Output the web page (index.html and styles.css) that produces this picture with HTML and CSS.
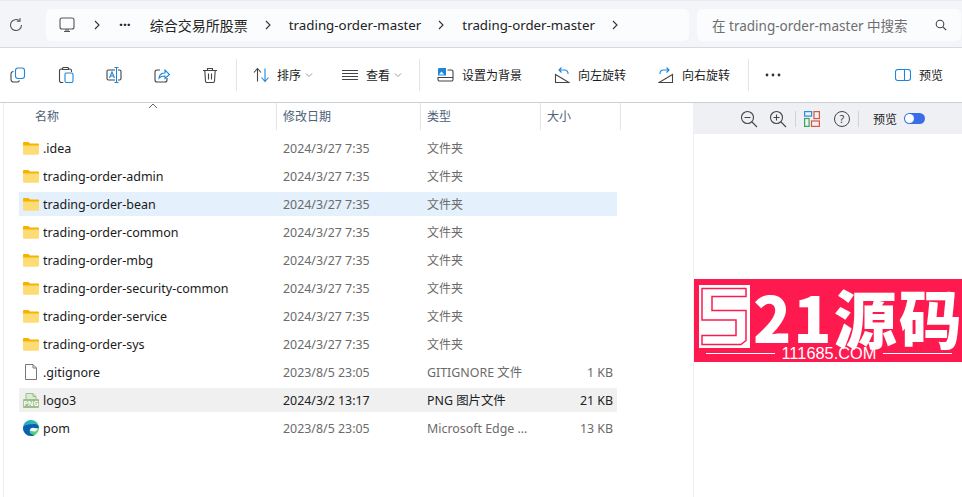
FILE: index.html
```html
<!DOCTYPE html>
<html lang="zh-CN">
  <head>
    <meta charset="UTF-8" />
    <title>trading-order-master</title>
    <link rel="stylesheet" href="styles.css">
  </head>
  <body>
    <svg class="defs" width="0" height="0">
      <symbol id="folder" viewBox="0 0 16 16">
        <path d="M0 3.200C0 2.500.5 2 1.200 2h4.200l1.800 1.600h7.600c.7 0 1.200.5 1.200 1.200V6H0z" fill="#f4b400"/>
        <path d="M0 5.400h16v8.200c0 .7-.5 1.200-1.200 1.200H1.200C.5 14.800 0 14.300 0 13.600z" fill="#fddc75"/>
      </symbol>
      <symbol id="chev" viewBox="0 0 8 12">
        <path d="M2 2l4 4-4 4" fill="none" stroke="#333" stroke-width="1.100"/>
      </symbol>
      <symbol id="down" viewBox="0 0 8 8">
        <path d="M1 2.500l3 3 3-3" fill="none" stroke="#999" stroke-width="1"/>
      </symbol>
    </svg>

    <header class="topbar">
      <svg class="reload" width="16" height="16" viewBox="0 0 16 16" fill="none" stroke="#555" stroke-width="1.100">
        <path d="M13.500 8A5.500 5.500 0 1 1 11.500 3.800"/>
        <path d="M12 1v3.200H8.800"/>
      </svg>
      <nav class="crumbs">
        <svg width="16" height="16" viewBox="0 0 16 16" fill="none" stroke="#555" stroke-width="1.100">
          <rect x="1" y="1" width="14" height="11" rx="2"/>
          <path d="M5 14.500h6M7 12v2M9 12v2"/>
        </svg>
        <svg class="chev first" width="8" height="12"><use href="#chev"/></svg>
        <span class="more">···</span>
        <span class="crumb">综合交易所股票</span>
        <svg class="chev" width="8" height="12"><use href="#chev"/></svg>
        <span class="crumb folder-crumb">trading-order-master</span>
        <svg class="chev" width="8" height="12"><use href="#chev"/></svg>
        <span class="crumb folder-crumb">trading-order-master</span>
        <svg class="chev" width="8" height="12"><use href="#chev"/></svg>
      </nav>
      <div class="search">
        <span>在 trading-order-master 中搜索</span>
        <svg width="12" height="12" viewBox="0 0 12 12" fill="none" stroke="#444" stroke-width="1.100">
          <circle cx="5" cy="5" r="3.800"/>
          <path d="M8 8l3.200 3.200"/>
        </svg>
      </div>
    </header>

    <div class="toolbar">
      <div class="icons">
        <svg width="16" height="16" viewBox="0 0 16 16" fill="none" stroke-width="1.100">
          <rect x="5.500" y="1" width="9" height="10.500" rx="2.500" stroke="#1b86dc"/>
          <path d="M3.500 4.500A2.500 2.500 0 0 0 1 7v5.500A2.500 2.500 0 0 0 3.500 15h3.500a2.500 2.500 0 0 0 2.500-1.500" stroke="#444"/>
        </svg>
        <svg width="16" height="16" viewBox="0 0 16 16" fill="none" stroke-width="1.100">
          <path d="M4.500 2H3.200A1.700 1.700 0 0 0 1.500 3.700v10.100a1.700 1.700 0 0 0 1.700 1.700h2M10.500 2h1.300a1.700 1.700 0 0 1 1.700 1.700V5M4.500 2.500V1.500a1 1 0 0 1 1-1h4a1 1 0 0 1 1 1v1z" stroke="#444"/>
          <rect x="7" y="6" width="8" height="9.500" rx="1.500" stroke="#1b86dc"/>
        </svg>
        <svg width="16" height="16" viewBox="0 0 16 16" fill="none" stroke-width="1.100">
          <path d="M9 3H2.500A1.500 1.500 0 0 0 1 4.500v7A1.500 1.500 0 0 0 2.500 13H9M12 3h1.500A1.500 1.500 0 0 1 15 4.500v7a1.500 1.500 0 0 1-1.500 1.500H12" stroke="#444"/>
          <path d="M3.500 11L6 5l2.500 6M4.500 9h3M8.500 .5h4M8.500 15.500h4M10.500 .5v15" stroke="#1b86dc"/>
        </svg>
        <svg width="16" height="16" viewBox="0 0 16 16" fill="none" stroke-width="1.100">
          <path d="M6 3H3a2 2 0 0 0-2 2v8a2 2 0 0 0 2 2h8a2 2 0 0 0 2-2v-2" stroke="#444"/>
          <path d="M5 11c.5-3.500 3-5 6-5V3l4.500 4.500L11 11.500V9c-2.500 0-4.500.5-6 2z" stroke="#1b86dc"/>
        </svg>
        <svg width="16" height="16" viewBox="0 0 16 16" fill="none" stroke="#444" stroke-width="1.100">
          <path d="M1 3.500h14M5.500 3.500V1.500h5v2M2.800 3.500l.7 10.500a1.500 1.500 0 0 0 1.500 1.500h6a1.500 1.500 0 0 0 1.500-1.500l.7-10.500M6.500 6.500v6M9.500 6.500v6"/>
        </svg>
      </div>
      <span class="sep"></span>
      <button class="tool sort">
        <svg width="16" height="16" viewBox="0 0 16 16" fill="none" stroke-width="1.100">
          <path d="M1 5.500L4.500 1.500 8 5.500M4.500 1.500v13" stroke="#444"/>
          <path d="M8.500 10.500l3.500 4 3.500-4M12 14.500v-13" stroke="#1b86dc"/>
        </svg>
        <span>排序</span>
        <svg class="down" width="8" height="8"><use href="#down"/></svg>
      </button>
      <button class="tool view">
        <svg width="16" height="16" viewBox="0 0 16 16" fill="none" stroke="#444" stroke-width="1">
          <path d="M0 3.500h16M0 6.500h16M0 9.500h16M0 12.500h16"/>
        </svg>
        <span>查看</span>
        <svg class="down" width="8" height="8"><use href="#down"/></svg>
      </button>
      <span class="sep after-view"></span>
      <button class="tool setbg">
        <svg width="17" height="16" viewBox="0 0 17 16" fill="none">
          <path d="M1 2.200A1.200 1.200 0 0 1 2.200 1H9v7.500H1z" fill="#1b86dc"/>
          <path d="M2 7.500l2.500-3 2.500 3z" fill="#fff"/>
          <path d="M10.500 3h4A1.500 1.500 0 0 1 16 4.500v8a1.500 1.500 0 0 1-1.500 1.500h-12A1.500 1.500 0 0 1 1 12.500V10.500h15" stroke="#444" stroke-width="1.100"/>
        </svg>
        <span>设置为背景</span>
      </button>
      <button class="tool rotate">
        <svg width="16" height="16" viewBox="0 0 16 16" fill="none" stroke-width="1.100">
          <path d="M1.500 7.500v8H15z" stroke="#444"/>
          <path d="M7.500 .5L5 3l2.500 2.500M5 3h5.500a3.500 3.500 0 0 1 3.500 4" stroke="#1b86dc"/>
        </svg>
        <span>向左旋转</span>
      </button>
      <button class="tool rotate">
        <svg width="16" height="16" viewBox="0 0 16 16" fill="none" stroke-width="1.100">
          <path d="M14.500 7.500v8H1z" stroke="#444"/>
          <path d="M8.500 .5L11 3 8.500 5.500M11 3H5.500A3.500 3.500 0 0 0 2 7" stroke="#1b86dc"/>
        </svg>
        <span>向右旋转</span>
      </button>
      <span class="sep after-rotate"></span>
      <svg class="dots" width="16" height="4" viewBox="0 0 16 4" fill="#333">
        <circle cx="2" cy="2" r="1.400"/><circle cx="8" cy="2" r="1.400"/><circle cx="14" cy="2" r="1.400"/>
      </svg>
      <button class="tool preview">
        <svg width="16" height="12" viewBox="0 0 16 12" fill="none" stroke="#1b86dc" stroke-width="1.100">
          <rect x=".5" y=".5" width="15" height="11" rx="2.500"/>
          <path d="M9.500 .5v11"/>
        </svg>
        <span>预览</span>
      </button>
    </div>

    <main class="content">
      <section class="files">
        <div class="cols head">
          <div class="hname">名称<svg class="caret" width="10" height="6" viewBox="0 0 10 6"><path d="M1 5l4-4 4 4" fill="none" stroke="#666"/></svg></div>
          <div>修改日期</div>
          <div>类型</div>
          <div>大小</div>
        </div>
        <div class="cols row"><div class="name"><svg width="16" height="16"><use href="#folder"/></svg>.idea</div><div>2024/3/27 7:35</div><div class="kind">文件夹</div><div></div></div>
        <div class="cols row"><div class="name"><svg width="16" height="16"><use href="#folder"/></svg>trading-order-admin</div><div>2024/3/27 7:35</div><div class="kind">文件夹</div><div></div></div>
        <div class="cols row hover"><div class="name"><svg width="16" height="16"><use href="#folder"/></svg>trading-order-bean</div><div>2024/3/27 7:35</div><div class="kind">文件夹</div><div></div></div>
        <div class="cols row"><div class="name"><svg width="16" height="16"><use href="#folder"/></svg>trading-order-common</div><div>2024/3/27 7:35</div><div class="kind">文件夹</div><div></div></div>
        <div class="cols row"><div class="name"><svg width="16" height="16"><use href="#folder"/></svg>trading-order-mbg</div><div>2024/3/27 7:35</div><div class="kind">文件夹</div><div></div></div>
        <div class="cols row"><div class="name"><svg width="16" height="16"><use href="#folder"/></svg>trading-order-security-common</div><div>2024/3/27 7:35</div><div class="kind">文件夹</div><div></div></div>
        <div class="cols row"><div class="name"><svg width="16" height="16"><use href="#folder"/></svg>trading-order-service</div><div>2024/3/27 7:35</div><div class="kind">文件夹</div><div></div></div>
        <div class="cols row"><div class="name"><svg width="16" height="16"><use href="#folder"/></svg>trading-order-sys</div><div>2024/3/27 7:35</div><div class="kind">文件夹</div><div></div></div>
        <div class="cols row">
          <div class="name">
            <svg width="16" height="16" viewBox="0 0 16 16" fill="#fff" stroke="#777">
              <path d="M2.500 .5h7.500l3.500 3.500v11.500h-11z"/><path d="M10 .5v3.500h3.500" fill="none"/>
            </svg>.gitignore
          </div>
          <div>2023/8/5 23:05</div><div>GITIGNORE 文件</div><div class="size">1 KB</div>
        </div>
        <div class="cols row selected">
          <div class="name">
            <span class="png">
              <svg width="16" height="16" viewBox="0 0 16 16" fill="#dcebd3" stroke="#9dbf8c">
                <path d="M3 9V1.500h7l3 3V9"/><path d="M10 1.500v3h3" fill="none"/>
              </svg>
              <span class="png-label">PNG</span>
            </span>logo3
          </div>
          <div>2024/3/2 13:17</div><div>PNG 图片文件</div><div class="size">21 KB</div>
        </div>
        <div class="cols row">
          <div class="name">
            <svg width="16" height="16" viewBox="0 0 16 16">
              <defs>
                <linearGradient id="edge" x1="0" y1="0" x2="1" y2="1">
                  <stop offset="0" stop-color="#1aa0d8"/><stop offset=".5" stop-color="#2fc3a0"/><stop offset="1" stop-color="#7fe05a"/>
                </linearGradient>
              </defs>
              <circle cx="8" cy="8" r="8" fill="url(#edge)"/>
              <path d="M0 8a8 8 0 0 0 8 8c2 0 3.500-.7 4.500-1.500-3 .8-6-.8-6-3.500 0-2 2-3 4-3 2.500 0 5 .5 5.500 0 0-2-1.500-4-5-4C5 4.500 1 4.500 0 8z" fill="#0f5fb0"/>
              <path d="M7 10.500c0-2 2-3 4-2.500 1.500.3 3 .8 4 .2-.5 2-2 3.200-4 3.200-2 0-4-1-4-.900z" fill="#fff"/>
            </svg>pom
          </div>
          <div>2023/8/5 23:05</div><div>Microsoft Edge ...</div><div class="size">13 KB</div>
        </div>
      </section>

      <aside class="pane">
        <div class="pane-bar">
          <svg width="18" height="18" viewBox="0 0 18 18" fill="none" stroke="#444" stroke-width="1.100">
            <circle cx="7.500" cy="7.500" r="6"/><path d="M12 12l5 5M4.500 7.500h6"/>
          </svg>
          <svg class="zoomin" width="18" height="18" viewBox="0 0 18 18" fill="none" stroke="#444" stroke-width="1.100">
            <circle cx="7.500" cy="7.500" r="6"/><path d="M12 12l5 5M4.500 7.500h6M7.500 4.500v6"/>
          </svg>
          <span class="bar-sep"></span>
          <svg class="layout" width="16" height="16" viewBox="0 0 16 16" fill="none" stroke-width="1.200">
            <rect x=".6" y=".6" width="7" height="4.500" stroke="#2a8fe0"/>
            <rect x="10" y=".6" width="5.400" height="7" stroke="#d9593d"/>
            <rect x=".6" y="7.500" width="4.500" height="7.900" stroke="#3fa45b"/>
            <rect x="7.500" y="10" width="7.900" height="5.400" stroke="#d9593d"/>
          </svg>
          <span class="help">?</span>
          <span class="bar-sep"></span>
          <span class="bar-label">预览</span>
          <span class="toggle"><span class="knob"></span></span>
        </div>
        <div class="pane-body">
          <div class="logo">
            <div class="logo-top">
              <svg class="mark" width="51" height="63" viewBox="0 0 51 63">
                <rect width="51" height="63" fill="#fff"/>
                <path d="M3 3.500h44v8H13v14h34v30l-5 4H3v-9h34V35H3z" fill="none" stroke="#fe1a4f" stroke-width="1.500"/>
              </svg>
              <span class="logo-name">21源码</span>
            </div>
            <div class="logo-url"><span class="rule"></span><span>111685.COM</span><span class="rule"></span></div>
          </div>
        </div>
      </aside>
    </main>
  </body>
</html>
```

FILE: styles.css
```css
* {
  box-sizing: border-box;
}
html,
body {
  height: 100%;
}
body {
  margin: 0;
  overflow: hidden;
  background-color: #fff;
  color: #1a1a1a;
  font-family: "Noto Sans", "Noto Sans CJK SC", sans-serif;
  font-size: 12px;
}
button {
  padding: 0;
  border: 0;
  background: none;
  color: inherit;
  font: inherit;
}
.defs {
  position: absolute;
}

/* address row */
.topbar {
  display: flex;
  align-items: center;
  height: 48px;
  padding: 1px 1px 0 8px;
  background-color: #f3f5f9;
  border-top: 1px solid #e9edf3;
  border-bottom: 1px solid #d6d9df;
}
.reload {
  margin-right: 22px;
}
.crumbs {
  display: flex;
  align-items: center;
  width: 643px;
  height: 32px;
  padding-left: 13px;
  background-color: #fbfcfe;
  border-radius: 5px;
  font-size: 14px;
  color: #222;
}
.folder-crumb {
  font-size: 13.300px;
}
.chev {
  margin: 0 17px 0 16px;
}
.chev.first {
  margin: 0 18px 0 18px;
}
.more {
  margin-right: 19px;
  font-weight: 700;
}
.search {
  display: flex;
  align-items: center;
  justify-content: space-between;
  width: 264px;
  height: 32px;
  margin-left: 8px;
  padding: 0 14px 0 15px;
  background-color: #fbfcfe;
  border-radius: 5px;
  font-size: 13.500px;
  color: #6e6e6e;
}

/* command bar */
.toolbar {
  display: flex;
  align-items: center;
  height: 55px;
  padding: 0 19px 0 10px;
  border-bottom: 1px solid #ccd0d6;
}
.icons {
  display: flex;
  gap: 32px;
}
.sep {
  width: 1px;
  height: 32px;
  margin-left: 18px;
  background-color: #e5e5e5;
}
.sep.after-view {
  margin-left: 17px;
}
.tool {
  display: flex;
  align-items: center;
  gap: 8px;
}
.down {
  margin-left: -4px;
}
.sort {
  margin-left: 16px;
}
.view {
  margin-left: 29px;
}
.setbg {
  margin-left: 17px;
}
.rotate {
  margin-left: 32px;
}
.dots {
  margin-left: 16px;
}
.preview {
  margin-left: auto;
}

/* file list */
.content {
  display: flex;
  height: 394px;
}
.files {
  flex: none;
  width: 693px;
  padding-left: 19px;
  background: linear-gradient(#eeeeee, #eeeeee) 3px 0 / 1px 100% no-repeat;
}
.cols {
  display: grid;
  grid-template-columns: 257px 144px 120px 77px;
  width: 598px;
  align-items: center;
}
.head {
  grid-template-columns: 258px 144px 120px 80px;
  height: 27px;
  width: 602px;
  margin-bottom: 6px;
  color: #4d6179;
}
.head > div {
  display: flex;
  align-items: center;
  height: 100%;
  padding: 0 0 2px 6px;
  border-right: 1px solid #e5e5e5;
}
.head > .hname {
  position: relative;
  padding-left: 16px;
}
.caret {
  position: absolute;
  left: 129px;
  top: 0;
}
.row {
  height: 24px;
  margin-bottom: 4px;
  color: #6b6b6b;
  font-size: 12.400px;
}
.row > div {
  padding-left: 7px;
  white-space: nowrap;
}
.row > .kind {
  font-size: 12px;
}
.row > .name {
  display: flex;
  align-items: center;
  gap: 4px;
  padding-left: 4px;
  color: #1a1a1a;
  font-size: 12.500px;
}
.row > .size {
  padding: 0 4px 0 0;
  text-align: right;
}
.hover {
  background-color: #e4f0fb;
}
.selected {
  background-color: #f0f0f0;
  color: #222;
}
.png {
  position: relative;
  display: block;
  width: 16px;
  height: 16px;
}
.png svg {
  display: block;
}
.png-label {
  position: absolute;
  left: 0;
  bottom: 0;
  width: 16px;
  height: 9px;
  background-color: #9dbf8c;
  border-radius: 1px;
  color: #fff;
  font-size: 7px;
  font-weight: 700;
  line-height: 9px;
  text-align: center;
}

/* preview side */
.pane {
  flex: 1;
  min-width: 0;
  display: flex;
  flex-direction: column;
  border-left: 1px solid #f0f0f0;
}
.pane-bar {
  display: flex;
  align-items: center;
  height: 31px;
  margin-left: -1px;
  padding-left: 47px;
  background-color: #eef0f4;
}
.zoomin {
  margin-left: 11px;
}
.bar-sep {
  width: 1px;
  height: 16px;
  margin: 0 8px;
  background-color: #d0d3d8;
}
.help {
  display: flex;
  align-items: center;
  justify-content: center;
  width: 16px;
  height: 16px;
  margin-left: 14px;
  border: 1px solid #444;
  border-radius: 50%;
  color: #444;
  font-size: 11px;
}
.bar-label {
  margin-left: 6px;
}
.toggle {
  display: flex;
  align-items: center;
  width: 21px;
  height: 11px;
  margin-left: 7px;
  padding-left: 1px;
  background-color: #3a6ee8;
  border-radius: 6px;
}
.knob {
  width: 9px;
  height: 9px;
  background-color: #fff;
  border-radius: 50%;
}
.pane-body {
  padding-top: 145px;
}
.logo {
  display: flex;
  flex-direction: column;
  height: 83px;
  padding: 6px 4px 0 5px;
  background-color: #fe1a4f;
  color: #fff;
}
.logo-top {
  display: flex;
  align-items: flex-start;
  height: 61px;
}
.mark {
  flex: none;
}
.logo-name {
  height: 61px;
  margin-left: 3px;
  font-family: "Noto Sans CJK SC", sans-serif;
  font-size: 63px;
  font-weight: 900;
  line-height: 62px;
  letter-spacing: 2px;
  white-space: nowrap;
}
.logo-url {
  display: flex;
  align-items: center;
  gap: 6px;
  margin-top: 1px;
  padding: 0 6px 0 7px;
  font-family: "Liberation Sans", sans-serif;
  font-size: 16.400px;
  line-height: 12px;
}
.rule {
  flex: 1;
  height: 1px;
  background-color: #fff;
}
```
